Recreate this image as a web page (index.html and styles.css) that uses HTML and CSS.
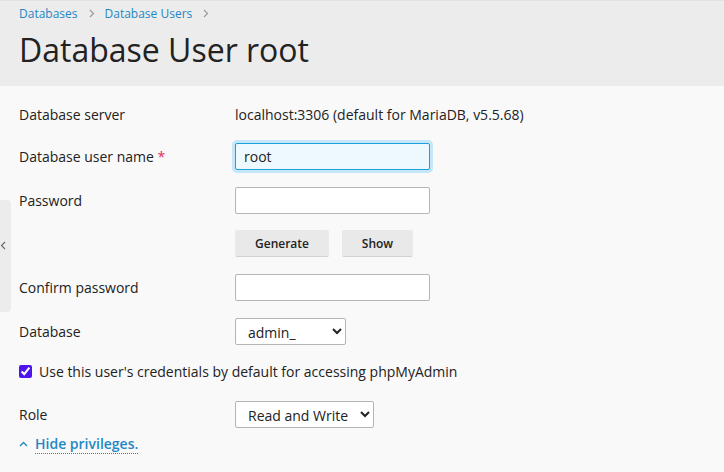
FILE: index.html
```html
<!DOCTYPE html>
<html lang="en">
<head>
    <meta charset="UTF-8">
    <meta name="viewport" content="width=device-width, initial-scale=1.0">
    <title>Database User root</title>
    <link rel="stylesheet" href="styles.css">
</head>
<body>
    <div class="page-header">
        <div class="breadcrumbs">
            <a href="#">Databases</a>
            <svg class="crumb-sep" width="6" height="9" viewBox="0 0 6 9"><path d="M1 1l3.5 3.5L1 8" fill="none" stroke="#9a9a9a" stroke-width="1.2"/></svg>
            <a href="#">Database Users</a>
            <svg class="crumb-sep" width="6" height="9" viewBox="0 0 6 9"><path d="M1 1l3.5 3.5L1 8" fill="none" stroke="#9a9a9a" stroke-width="1.2"/></svg>
        </div>
        <h1>Database User root</h1>
    </div>

    <div class="side-toggle">
        <svg width="6" height="9" viewBox="0 0 6 9"><path d="M5 1L1.5 4.5 5 8" fill="none" stroke="#666" stroke-width="1.1"/></svg>
    </div>

    <form class="user-form">
        <div class="form-row first">
            <label class="form-label">Database server</label>
            <span class="form-value">localhost:3306 (default for MariaDB, v5.5.68)</span>
        </div>
        <div class="form-row">
            <label class="form-label" for="login">Database user name <span class="required">*</span></label>
            <input type="text" id="login" class="text-input focused" value="root">
        </div>
        <div class="form-row">
            <label class="form-label" for="password">Password</label>
            <input type="password" id="password" class="text-input">
        </div>
        <div class="form-row row-buttons">
            <span class="form-label"></span>
            <div class="buttons">
                <button type="button" class="btn btn-generate">Generate</button>
                <button type="button" class="btn btn-show">Show</button>
            </div>
        </div>
        <div class="form-row">
            <label class="form-label" for="confirm">Confirm password</label>
            <input type="password" id="confirm" class="text-input">
        </div>
        <div class="form-row">
            <label class="form-label" for="database">Database</label>
            <select id="database" class="select select-db">
                <option>admin_</option>
            </select>
        </div>
        <div class="check-row">
            <input type="checkbox" id="default" checked>
            <label for="default">Use this user's credentials by default for accessing phpMyAdmin</label>
        </div>
        <div class="form-row row-role">
            <label class="form-label" for="role">Role</label>
            <select id="role" class="select select-role">
                <option>Read and Write</option>
            </select>
        </div>
        <div class="toggle-row">
            <svg width="9" height="6" viewBox="0 0 9 6"><path d="M1 5l3.5-3.5L8 5" fill="none" stroke="#1f87c4" stroke-width="1.3"/></svg>
            <a href="#" class="toggle-link">Hide privileges.</a>
        </div>
    </form>
</body>
</html>
```

FILE: styles.css
```css
body {
    font-family: "Open Sans", "Noto Sans", sans-serif;
    margin: 0;
    padding: 0;
    background-color: #f9f9f9;
    color: #222;
    font-size: 14px;
}
a {
    color: #1f87c4;
    text-decoration: none;
}
.page-header {
    background-color: #ececec;
    height: 86px;
    padding: 0 19px;
    box-sizing: border-box;
    border-top: 1px solid #e3e3e3;
}
.breadcrumbs {
    display: flex;
    align-items: center;
    font-size: 12px;
    height: 24px;
}
.crumb-sep {
    margin: 0 10px 0 11px;
}
h1 {
    font-size: 32px;
    font-weight: 400;
    margin: 0;
    padding-top: 3px;
    line-height: 44px;
    color: #222;
}
.side-toggle {
    position: absolute;
    left: 0;
    top: 200px;
    width: 11px;
    height: 112px;
    background-color: #ececec;
    border-radius: 0 4px 4px 0;
}
.side-toggle svg {
    display: block;
    margin-top: 41px;
}
.user-form {
    padding: 15px 19px 0;
}
.form-row {
    display: flex;
    align-items: center;
    min-height: 27px;
    margin-top: 17px;
}
.form-row.first {
    margin-top: 0;
    margin-bottom: -2px;
}
.form-row.row-buttons {
    margin-top: 16px;
}
.form-row.row-role {
    margin-top: 20px;
}
.form-label {
    width: 216px;
    flex-shrink: 0;
}
.required {
    color: #e02b5c;
}
.text-input {
    width: 195px;
    height: 27px;
    box-sizing: border-box;
    border: 1px solid #b5b5b5;
    border-radius: 2px;
    background: #fff;
    font-family: inherit;
    font-size: 14px;
    padding: 0 8px;
    color: #222;
    outline: none;
}
.text-input.focused {
    border-color: #1aa0dc;
    background: #eef9ff;
    box-shadow: 0 0 0 3px #c6e6fa;
}
.buttons {
    display: flex;
    gap: 13px;
}
.btn {
    height: 27px;
    border: none;
    border-bottom: 1px solid #d2d2d2;
    background-color: #e9e9e9;
    font-family: inherit;
    font-size: 12px;
    font-weight: 600;
    color: #222;
    border-radius: 2px;
    cursor: pointer;
}
.btn-generate {
    width: 94px;
}
.btn-show {
    width: 71px;
}
.select {
    height: 27px;
    box-sizing: border-box;
    border: 1px solid #b5b5b5;
    border-radius: 2px;
    background: #fff;
    font-family: inherit;
    font-size: 14px;
    color: #222;
    padding: 2px 4px 0 8px;
}
.select-db {
    width: 111px;
}
.select-role {
    width: 139px;
}
.check-row {
    display: flex;
    align-items: center;
    margin-top: 16px;
    height: 20px;
}
.check-row input {
    margin: 0 7px 0 0;
    width: 13px;
    height: 13px;
    accent-color: #4d14ee;
}
.toggle-row {
    display: flex;
    align-items: center;
    margin-top: 6px;
    height: 20px;
}
.toggle-row svg {
    margin-right: 7px;
}
.toggle-link {
    font-weight: 600;
    border-bottom: 1px dotted #1f87c4;
    line-height: 18px;
}
```
